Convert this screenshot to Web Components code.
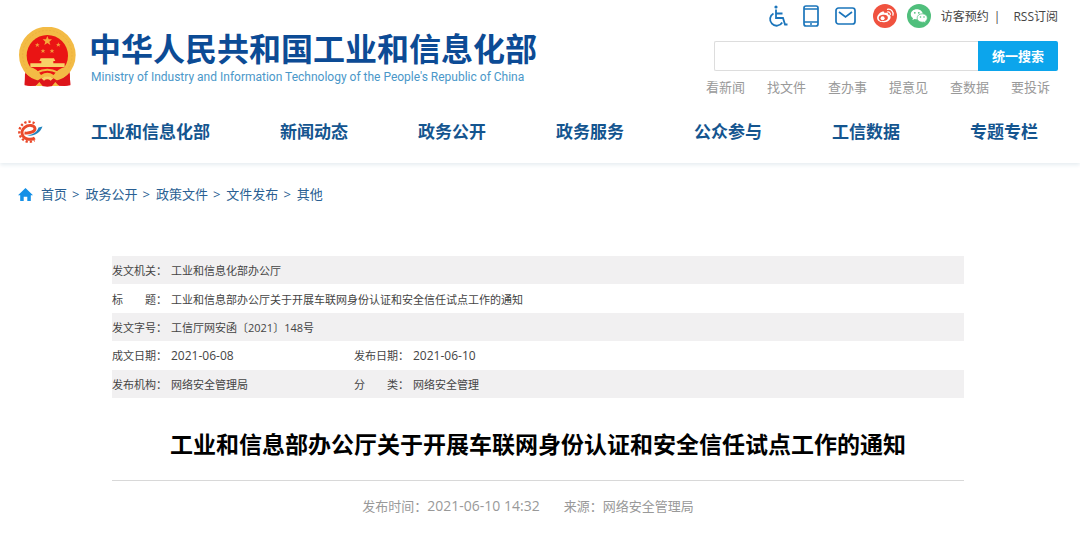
<!DOCTYPE html>
<html lang="zh-CN">
<head>
<meta charset="utf-8">
<title>工业和信息化部</title>
<style>
  body {
    margin: 0;
    background: #fff;
    color: #444;
    font-family: "Open Sans", "Noto Sans CJK SC", sans-serif;
    font-size: 13px;
    line-height: 20px;
  }
</style>
</head>
<body>

<site-header>
  <site-brand slot="brand">
    中华人民共和国工业和信息化部
    <span slot="english">Ministry of Industry and Information Technology of the People's Republic of China</span>
  </site-brand>
  <tool-links slot="tools">
    <a href="#visit">访客预约</a>
    <a href="#rss" slot="last">RSS订阅</a>
  </tool-links>
  <search-box slot="tools">
    <a href="#news">看新闻</a>
    <a href="#files">找文件</a>
    <a href="#services">查办事</a>
    <a href="#advice">提意见</a>
    <a href="#data">查数据</a>
    <a href="#complaint">要投诉</a>
  </search-box>
  <site-nav slot="nav">
    <a href="#miit">工业和信息化部</a>
    <a href="#xwdt">新闻动态</a>
    <a href="#zwgk">政务公开</a>
    <a href="#zwfw">政务服务</a>
    <a href="#gzcy">公众参与</a>
    <a href="#gxsj">工信数据</a>
    <a href="#ztzl">专题专栏</a>
  </site-nav>
</site-header>

<main>
  <crumb-trail>
    <crumb-item href="#home" first>首页</crumb-item>
    <crumb-item href="#zwgk">政务公开</crumb-item>
    <crumb-item href="#zcwj">政策文件</crumb-item>
    <crumb-item href="#wjfb">文件发布</crumb-item>
    <crumb-item href="#qt">其他</crumb-item>
  </crumb-trail>
  <doc-info></doc-info>
  <article-head>
    工业和信息部办公厅关于开展车联网身份认证和安全信任试点工作的通知
    <span slot="date">2021-06-10 14:32</span>
    <span slot="source">网络安全管理局</span>
  </article-head>
</main>

<template id="site-header">
  <style>
    :host {
      display: block;
      box-shadow: 0 2px 4px #e6edf1;
    }
    .top {
      display: flex;
      justify-content: space-between;
      padding: 0 22px 0 18px;
    }
    .tools {
      flex: 0 0 352px;
    }
  </style>
  <header>
    <div class="top">
      <slot name="brand"></slot>
      <div class="tools"><slot name="tools"></slot></div>
    </div>
    <slot name="nav"></slot>
  </header>
</template>

<template id="site-brand">
  <style>
    :host {
      display: flex;
      align-items: flex-start;
      gap: 12px;
      padding-top: 27px;
      font-family: "Noto Sans CJK SC", sans-serif;
      white-space: nowrap;
    }
    svg {
      flex: none;
      width: 59px;
      height: 60px;
    }
    .name {
      color: #0c4b95;
      font-size: 32px;
      font-weight: 700;
      line-height: 40px;
    }
    .english {
      padding-left: 2px;
      color: #4a97c9;
      font-family: Roboto, sans-serif;
      font-size: 12px;
      line-height: 20px;
    }
  </style>
  <svg viewBox="24 21 177 180" aria-hidden="true">
    <path d="M47 145 L44 196 Q62 200 80 196 L112 200 L144 196 Q162 200 181 196 L178 145 Z" fill="#dd151a"/>
    <circle cx="112" cy="105" r="85" fill="#f3bb45"/>
    <circle cx="112" cy="105" r="74" fill="none" stroke="#edb23e" stroke-width="3" stroke-dasharray="6 5"/>
    <circle cx="112" cy="107" r="62" fill="#ea1414"/>
    <path d="M112 48 l4 10 h10 l-8 7 3 10 -9 -6 -9 6 3 -10 -8 -7 h10z" fill="#f6ab3c"/>
    <g fill="#f49a3a">
      <path d="M82 68 l2 5 h5 l-4 3 2 5 -5 -3 -5 3 2 -5 -4 -3 h5z"/>
      <path d="M145 67 l2 5 h5 l-4 3 2 5 -5 -3 -5 3 2 -5 -4 -3 h5z"/>
      <path d="M99 86 l2 5 h5 l-4 3 2 5 -5 -3 -5 3 2 -5 -4 -3 h5z"/>
      <path d="M126 86 l2 5 h5 l-4 3 2 5 -5 -3 -5 3 2 -5 -4 -3 h5z"/>
    </g>
    <path d="M92 115 h40 l4 8 h-48z M94 123 h36 v7 h-36z M61 130 h103 v11 h-103z" fill="#f8d267"/>
    <path d="M58 142 h109 l-10 12 h-89z" fill="#ea1414"/>
    <path d="M58 140 Q82 146 93 165 Q112 152 131 165 Q143 146 167 140 L176 152 Q152 176 132 181 Q112 166 92 181 Q68 174 47 152Z" fill="#f3bb45"/>
    <path d="M80 158 Q112 140 144 158" fill="none" stroke="#f3bb45" stroke-width="6"/>
    <path d="M82 182 Q98 170 112 170 Q126 170 142 182 L136 190 L112 192 L88 190Z" fill="#dd151a"/>
    <path d="M94 175 Q112 162 130 175 L122 182 Q112 174 102 182Z" fill="#f8d267"/>
    <path d="M45 160 Q64 178 86 182 L78 197 Q58 198 44 194Z M179 160 Q160 178 138 182 L146 197 Q166 198 181 194Z" fill="#dd151a"/>
    <path d="M77 198 L88 186 L98 198Z M147 198 L136 186 L126 198Z" fill="#f3bb45"/>
  </svg>
  <div>
    <div class="name"><slot></slot></div>
    <div class="english"><slot name="english"></slot></div>
  </div>
</template>

<template id="tool-links">
  <style>
    :host {
      display: flex;
      align-items: center;
      justify-content: flex-end;
      gap: 10px;
      padding-top: 4px;
      font-size: 12px;
    }
    a, svg {
      display: block;
    }
    a {
      color: #1b75bb;
    }
    .weibo {
      margin-left: 4px;
    }
    ::slotted(a) {
      color: #444;
      text-decoration: none;
    }
    .text {
      display: flex;
      gap: 5px;
      padding-top: 1px;
    }
    .bar {
      padding-right: 8px;
    }
  </style>
  <a href="#access" aria-label="无障碍">
    <svg width="24" height="24" viewBox="0 0 24 24" fill="none" stroke="currentColor" stroke-width="1.800">
      <circle cx="9" cy="3" r="1.600" fill="currentColor" stroke="none"/>
      <path d="M9 5.500v8.500h7l2 6.500h2.500M9 9.500h6.500M6.500 9.500a6.500 6.500 0 1 0 8.700 9"/>
    </svg>
  </a>
  <a href="#mobile" aria-label="手机版">
    <svg width="24" height="24" viewBox="0 0 24 24" fill="none" stroke="currentColor" stroke-width="1.700">
      <rect x="3" y="2" width="14" height="20" rx="2"/>
      <path d="M3 5h14M3 18h14M9 20h2"/>
    </svg>
  </a>
  <a href="#mail" aria-label="邮箱">
    <svg width="24" height="24" viewBox="0 0 24 24" fill="none" stroke="currentColor" stroke-width="1.700">
      <rect x="1" y="4" width="19" height="16" rx="2.500"/>
      <path d="M4 8l6.500 5 6.500-5"/>
    </svg>
  </a>
  <a class="weibo" href="#weibo" aria-label="微博">
    <svg width="24" height="24" viewBox="0 0 24 24">
      <circle cx="12" cy="12" r="12" fill="#f0523f"/>
      <path d="M9.500 7.600c1.200-.4 2.200.2 1.900 1.700 2-.8 4-.7 3.800 1.300 1.900.5 2.800 1.700 2.300 3.300-.8 2.600-3.800 4.300-7.200 4.300-3.800 0-6.200-1.800-6.200-4.200 0-2.300 2.600-5.500 5.400-6.400z" fill="#fff"/>
      <ellipse cx="10.300" cy="13.900" rx="4.600" ry="3.100" fill="#f0523f" transform="rotate(-8 10.300 13.900)"/>
      <circle cx="9.600" cy="14.200" r="2" fill="#fff"/>
      <path d="M14.500 5.300a4.700 4.700 0 0 1 5.400 6M14.700 7.900a2.300 2.300 0 0 1 2.600 2.800" fill="none" stroke="#fff" stroke-width="1.200" stroke-linecap="round"/>
    </svg>
  </a>
  <a href="#wechat" aria-label="微信">
    <svg width="24" height="24" viewBox="0 0 24 24">
      <circle cx="12" cy="12" r="12" fill="#50bf7c"/>
      <path d="M9.800 5.200c-3.400 0-6 2.200-6 5 0 1.600.8 3 2.200 3.900l-.6 2 2.300-1.200c.7.200 1.400.3 2.100.3 3.300 0 6-2.200 6-5s-2.700-5-6-5z" fill="#fff"/>
      <path d="M15.200 9.800c-2.900 0-5.100 1.900-5.100 4.200s2.200 4.200 5.100 4.200c.6 0 1.200-.1 1.700-.2l2 1-.5-1.700c1.200-.8 1.900-2 1.900-3.300 0-2.300-2.300-4.200-5.100-4.200z" fill="#fff" stroke="#50bf7c" stroke-width=".7"/>
      <g fill="#50bf7c">
        <circle cx="7.800" cy="8.800" r=".9"/><circle cx="11.800" cy="8.800" r=".9"/>
        <circle cx="13.500" cy="13" r=".8"/><circle cx="17" cy="13" r=".8"/>
      </g>
    </svg>
  </a>
  <div class="text">
    <slot></slot>
    <span class="bar">|</span>
    <slot name="last"></slot>
  </div>
</template>

<template id="search-box">
  <style>
    :host {
      display: block;
    }
    form {
      display: flex;
      height: 30px;
      margin: 13px 0 0 8px;
    }
    input {
      flex: 1;
      min-width: 0;
      box-sizing: border-box;
      padding: 0 8px;
      border: 1px solid #ddd;
      border-right: 0;
      border-radius: 2px 0 0 2px;
      font: inherit;
    }
    button {
      flex: 0 0 80px;
      padding: 0;
      border: 0;
      border-radius: 0 2px 2px 0;
      background: #0ca5ec;
      color: #fff;
      font: inherit;
      font-weight: 700;
    }
    .hot {
      display: flex;
      justify-content: space-between;
      padding: 6px 8px 0 0;
    }
    ::slotted(a) {
      color: #999;
      text-decoration: none;
    }
  </style>
  <form>
    <input type="text" aria-label="搜索">
    <button type="button">统一搜索</button>
  </form>
  <div class="hot"><slot></slot></div>
</template>

<template id="site-nav">
  <style>
    :host {
      display: block;
      padding: 17px 42px 13px 16px;
    }
    nav {
      display: flex;
      align-items: center;
      height: 36px;
    }
    svg {
      flex: none;
      width: 27px;
      height: 24px;
      margin-right: 48px;
    }
    .links {
      display: flex;
      flex: 1;
      justify-content: space-between;
    }
    ::slotted(a) {
      color: #14558f;
      font-size: 17px;
      font-weight: 700;
      line-height: 24px;
      text-decoration: none;
    }
  </style>
  <nav>
    <svg viewBox="0 0 27 24" fill="none" aria-hidden="true">
      <path d="M18.500 3.200A10 10 0 1 0 18.500 20.300" stroke="#ea4a2b" stroke-width="2.400" stroke-dasharray="2.200 1.900"/>
      <path d="M8.500 13C13 13.600 19.300 11.800 19 8.600C18.600 5 12.500 4.200 8.700 7.300C4 11.300 5.600 18.300 12.500 19.200C15 19.500 17 19.200 18.800 18" stroke="#ea4a2b" stroke-width="2.900"/>
      <path d="M11 15.300C17 17 24 13.500 26.500 6.500L22.500 7.500C21.500 11.500 17 15 11 15.300Z" fill="#2285bf"/>
    </svg>
    <div class="links"><slot></slot></div>
  </nav>
</template>

<template id="crumb-trail">
  <style>
    :host {
      display: block;
      padding: 21px 18px 0;
    }
    nav {
      display: flex;
      align-items: center;
      gap: 5px;
    }
    svg {
      width: 15px;
      height: 13px;
      margin-right: 3px;
    }
  </style>
  <nav>
    <svg viewBox="0 0 15 13" aria-hidden="true">
      <path d="M7.500 0L15 7.200h-2.200V13H9.300V8.800H5.700V13H2.200V7.200H0z" fill="#1590e6"/>
    </svg>
    <slot></slot>
  </nav>
</template>

<template id="crumb-item">
  <style>
    :host {
      display: flex;
      gap: 6px;
      color: #2a5f93;
    }
    :host([first]) span {
      display: none;
    }
    a {
      color: inherit;
      text-decoration: none;
    }
  </style>
  <span>&gt;</span>
  <a><slot></slot></a>
</template>

<template id="doc-info">
  <style>
    :host {
      display: block;
      padding: 52px 116px 0 112px;
    }
    table {
      width: 100%;
      height: 142px;
      border-collapse: collapse;
      table-layout: fixed;
      font-size: 11px;
      line-height: 20px;
    }
    tr:nth-child(odd) {
      background: #f1f0f1;
    }
    th, td {
      padding: 2px 0 0;
      font-weight: 400;
      text-align: left;
      white-space: nowrap;
    }
    .label {
      width: 59px;
    }
    .value {
      width: 183px;
    }
    time {
      font-size: 12px;
    }
  </style>
  <table>
    <colgroup><col class="label"><col class="value"><col class="label"><col></colgroup>
    <tbody>
      <tr><th scope="row">发文机关：</th><td colspan="3">工业和信息化部办公厅</td></tr>
      <tr><th scope="row">标　　题：</th><td colspan="3">工业和信息部办公厅关于开展车联网身份认证和安全信任试点工作的通知</td></tr>
      <tr><th scope="row">发文字号：</th><td colspan="3">工信厅网安函〔2021〕148号</td></tr>
      <tr>
        <th scope="row">成文日期：</th><td><time>2021-06-08</time></td>
        <th scope="row">发布日期：</th><td><time>2021-06-10</time></td>
      </tr>
      <tr>
        <th scope="row">发布机构：</th><td>网络安全管理局</td>
        <th scope="row">分　　类：</th><td>网络安全管理</td>
      </tr>
    </tbody>
  </table>
</template>

<template id="article-head">
  <style>
    :host {
      display: block;
      padding: 29px 116px 0 112px;
      text-align: center;
    }
    h1 {
      margin: 0;
      padding-bottom: 19px;
      border-bottom: 1px solid #d8d8d8;
      color: #000;
      font-size: 23px;
      line-height: 34px;
    }
    .meta {
      display: flex;
      justify-content: center;
      gap: 24px;
      margin-right: 20px;
      padding-top: 15px;
      color: #999;
    }
    time {
      font-size: 14px;
    }
  </style>
  <h1><slot></slot></h1>
  <div class="meta">
    <span>发布时间：<time><slot name="date"></slot></time></span>
    <span>来源：<slot name="source"></slot></span>
  </div>
</template>

<script>
  class TemplateElement extends HTMLElement {
    constructor() {
      super();
      this.shadow = this.attachShadow({mode: 'open'});
      const template = document.getElementById(this.localName);
      this.shadow.appendChild(template.content.cloneNode(true));
    }
  }

  class CrumbItem extends TemplateElement {
    connectedCallback() {
      this.shadow.querySelector('a').setAttribute('href', this.getAttribute('href') || '#');
    }
  }

  customElements.define('site-header', class extends TemplateElement {});
  customElements.define('site-brand', class extends TemplateElement {});
  customElements.define('tool-links', class extends TemplateElement {});
  customElements.define('search-box', class extends TemplateElement {});
  customElements.define('site-nav', class extends TemplateElement {});
  customElements.define('crumb-trail', class extends TemplateElement {});
  customElements.define('crumb-item', CrumbItem);
  customElements.define('doc-info', class extends TemplateElement {});
  customElements.define('article-head', class extends TemplateElement {});
</script>
</body>
</html>
